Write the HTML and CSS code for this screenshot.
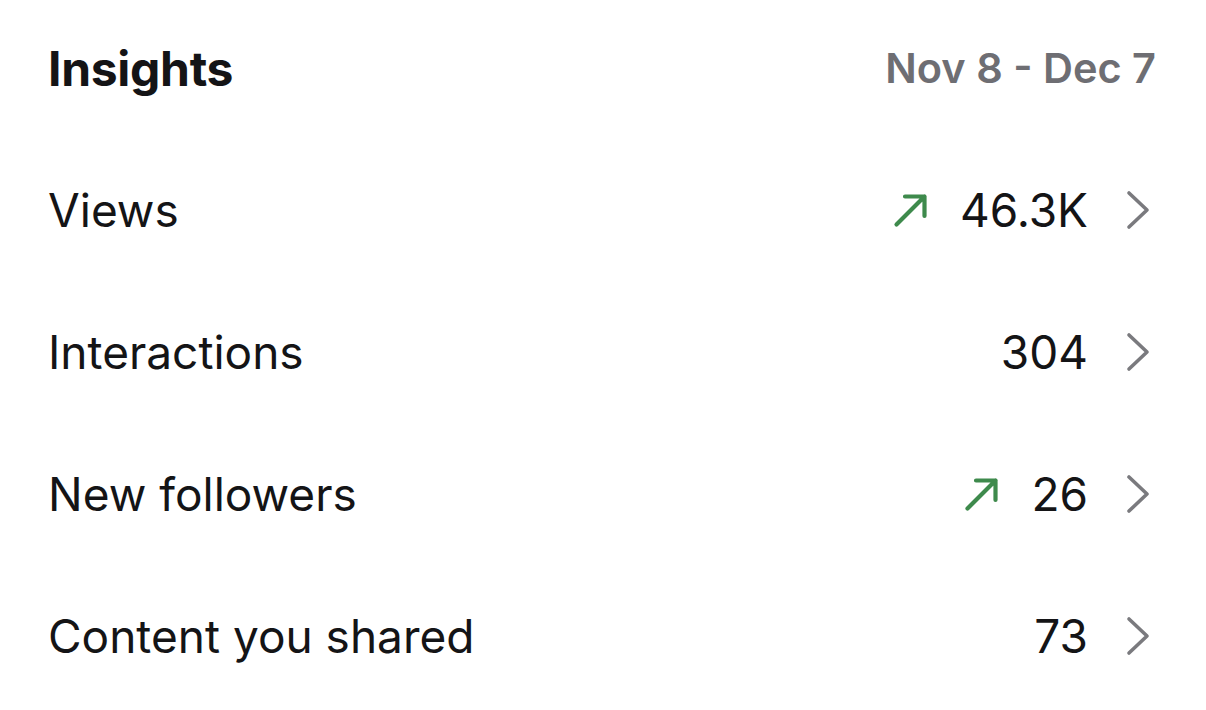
FILE: index.html
```html
<!DOCTYPE html>
<html>
<head>
<meta charset="utf-8">
<link rel="stylesheet" href="styles.css">
</head>
<body>
<div class="panel">
  <div class="header">
    <div class="title">Insights</div>
    <div class="date">Nov 8 - Dec 7</div>
  </div>
  <div class="row">
    <div class="label">Views</div>
    <div class="right">
      <svg class="trend" viewBox="0 0 36 36" width="36" height="36"><path d="M3.5 32.5 L31.5 4.5 M12 4.5 H31.5 V24" fill="none" stroke="#3e8a4c" stroke-width="4.2" stroke-linecap="round" stroke-linejoin="round"/></svg>
      <span class="value">46.3K</span>
      <svg class="chev" viewBox="0 0 28 40" width="28" height="40"><path d="M5 3 L23 20 L5 37" fill="none" stroke="#7a7a7e" stroke-width="3.6" stroke-linecap="round" stroke-linejoin="round"/></svg>
    </div>
  </div>
  <div class="row">
    <div class="label">Interactions</div>
    <div class="right">
      <span class="value">304</span>
      <svg class="chev" viewBox="0 0 28 40" width="28" height="40"><path d="M5 3 L23 20 L5 37" fill="none" stroke="#7a7a7e" stroke-width="3.6" stroke-linecap="round" stroke-linejoin="round"/></svg>
    </div>
  </div>
  <div class="row">
    <div class="label">New followers</div>
    <div class="right">
      <svg class="trend" viewBox="0 0 36 36" width="36" height="36"><path d="M3.5 32.5 L31.5 4.5 M12 4.5 H31.5 V24" fill="none" stroke="#3e8a4c" stroke-width="4.2" stroke-linecap="round" stroke-linejoin="round"/></svg>
      <span class="value">26</span>
      <svg class="chev" viewBox="0 0 28 40" width="28" height="40"><path d="M5 3 L23 20 L5 37" fill="none" stroke="#7a7a7e" stroke-width="3.6" stroke-linecap="round" stroke-linejoin="round"/></svg>
    </div>
  </div>
  <div class="row">
    <div class="label">Content you shared</div>
    <div class="right">
      <span class="value">73</span>
      <svg class="chev" viewBox="0 0 28 40" width="28" height="40"><path d="M5 3 L23 20 L5 37" fill="none" stroke="#7a7a7e" stroke-width="3.6" stroke-linecap="round" stroke-linejoin="round"/></svg>
    </div>
  </div>
</div>
</body>
</html>
```
FILE: styles.css
```css
html, body {
  margin: 0;
  padding: 0;
  background: #ffffff;
}
body {
  font-family: Inter, "Noto Sans", "Liberation Sans", sans-serif;
  color: #141416;
  width: 1206px;
  height: 710px;
  overflow: hidden;
}
.panel {
  padding: 0 50px 0 48px;
}
.header {
  height: 136px;
  margin-bottom: 3px;
  display: flex;
  align-items: center;
  justify-content: space-between;
}
.title {
  font-size: 48px;
  font-weight: 700;
  letter-spacing: -0.3px;
}
.date {
  font-size: 41.5px;
  font-weight: 600;
  color: #6e6e73;
}
.row {
  height: 142px;
  display: flex;
  align-items: center;
  justify-content: space-between;
}
.label {
  font-size: 46px;
  font-weight: 400;
}
.right {
  display: flex;
  align-items: center;
}
.trend {
  margin-right: 31px;
}
.value {
  font-size: 46px;
  font-weight: 400;
}
.chev {
  margin-left: 36px;
  margin-right: 4px;
}
```
